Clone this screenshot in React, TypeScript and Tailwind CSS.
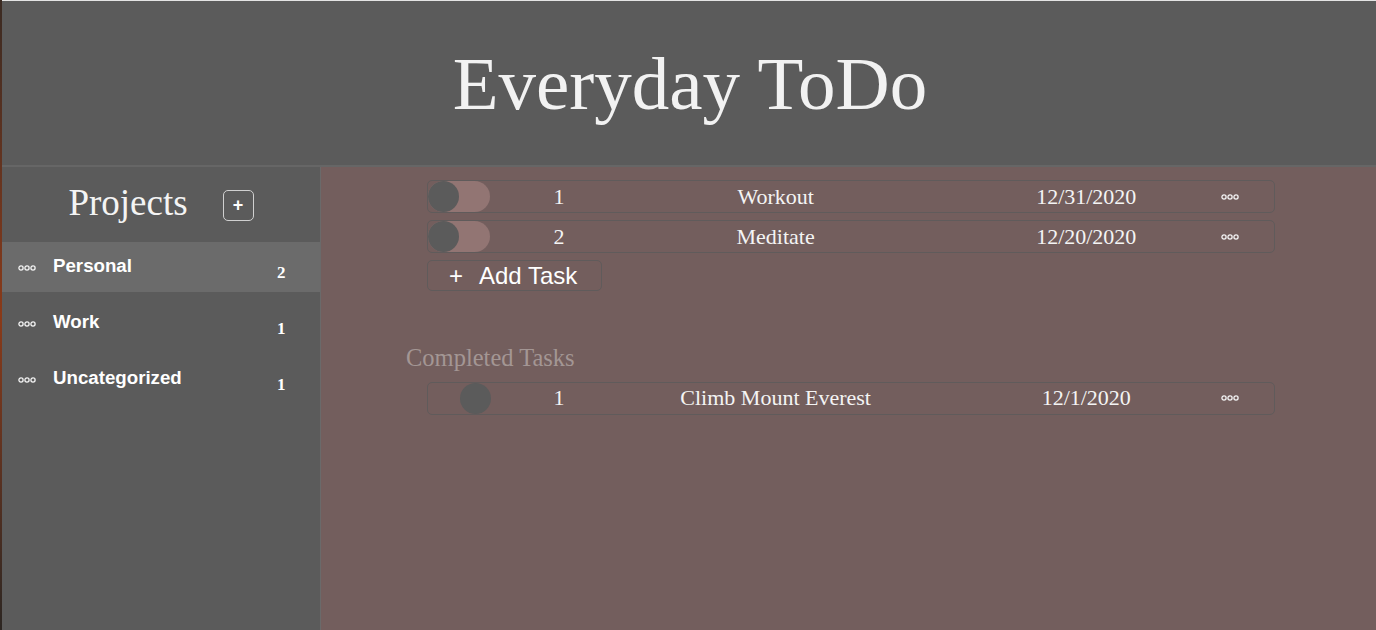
import React from "react";

const serif = { fontFamily: '"Liberation Serif", "Times New Roman", serif' };
const sans = { fontFamily: '"Liberation Sans", Arial, sans-serif' };

function Dots() {
  return (
    <svg width="18" height="6" viewBox="0 0 18 6" className="block">
      <circle cx="3" cy="3" r="2.1" fill="none" stroke="#f2f2f2" strokeWidth="1.3" />
      <circle cx="9" cy="3" r="2.1" fill="none" stroke="#f2f2f2" strokeWidth="1.3" />
      <circle cx="15" cy="3" r="2.1" fill="none" stroke="#f2f2f2" strokeWidth="1.3" />
    </svg>
  );
}

type Task = { n: number; name: string; date: string; done?: boolean };

function TaskRow({ t }: { t: Task }) {
  return (
    <div
      className="flex items-center h-[33px] w-[848px] rounded-[5px] border border-[#605b5b] text-[22px] text-[#f4f4f4]"
      style={serif}
    >
      <div className="w-[62px] h-[31px] shrink-0 relative">
        {t.done ? (
          <div className="absolute left-[32px] top-0 w-[31px] h-[31px] rounded-full bg-[#5b5b5b]" />
        ) : (
          <div className="w-[62px] h-[31px] rounded-full bg-[#927573] relative">
            <div className="absolute left-0 top-0 w-[31px] h-[31px] rounded-full bg-[#5b5b5b]" />
          </div>
        )}
      </div>
      <div className="w-[138px] text-center leading-none">{t.n}</div>
      <div className="w-[296px] text-center leading-none">{t.name}</div>
      <div className="w-[76px]" />
      <div className="w-[174px] text-center leading-none">{t.date}</div>
      <div className="w-[13px]" />
      <div className="w-[88px] flex justify-center">
        <Dots />
      </div>
    </div>
  );
}

export default function App() {
  const projects = [
    { name: "Personal", count: 2, active: true },
    { name: "Work", count: 1 },
    { name: "Uncategorized", count: 1 },
  ];
  const tasks: Task[] = [
    { n: 1, name: "Workout", date: "12/31/2020" },
    { n: 2, name: "Meditate", date: "12/20/2020" },
  ];
  return (
    <div className="flex w-[1376px] h-[630px] overflow-hidden bg-[#5b5b5b]">
      <div className="w-[2px] shrink-0 bg-gradient-to-b from-[#3a2a22] via-[#8a3a18] to-[#2c2622]" />
      <div className="flex-1 flex flex-col">
        <div className="h-[1px] bg-[#e4e4e4]" />
        <header className="h-[166px] shrink-0 flex items-center justify-center border-b-2 border-[#666666] bg-[#5b5b5b]">
          <h1 className="text-[75px] leading-none text-[#f2f2f2] pl-[2px]" style={serif}>
            Everyday ToDo
          </h1>
        </header>
        <div className="flex flex-1 min-h-0">
          <aside className="w-[319px] shrink-0 border-r border-[#6a6a6a] bg-[#5b5b5b]">
            <div className="h-[75px] flex items-center justify-center gap-[35px] pt-[2px]">
              <span className="text-[37px] leading-none text-[#f4f4f4] pb-[6px]" style={serif}>
                Projects
              </span>
              <div
                className="w-[31px] h-[31px] rounded-[5px] border border-[#d0d0d0] flex items-center justify-center text-white font-bold text-[18px] leading-none pb-[1px]"
                style={sans}
              >
                +
              </div>
            </div>
            <div className="flex flex-col gap-[6px]">
              {projects.map((p) => (
                <div
                  key={p.name}
                  className={`h-[50px] flex items-center ${p.active ? "bg-[#6b6b6b]" : ""}`}
                >
                  <div className="w-[16px]" />
                  <div className="pt-[1px]">
                    <Dots />
                  </div>
                  <div className="w-[17px]" />
                  <span className="w-[224px] text-[18.7px] font-bold text-white leading-none pb-[1px]" style={sans}>
                    {p.name}
                  </span>
                  <span className="text-[17px] font-bold text-white leading-none pt-[10px]" style={serif}>
                    {p.count}
                  </span>
                </div>
              ))}
            </div>
          </aside>
          <main className="flex-1 bg-[#735e5d] pt-[13px]">
            <div className="w-[848px] ml-[106px] flex flex-col gap-[7px]">
              {tasks.map((t) => (
                <TaskRow key={t.n} t={t} />
              ))}
              <div
                className="w-[175px] h-[31px] rounded-[5px] border border-[#605b5b] flex items-center pl-[21px] text-[24px] text-white leading-none"
                style={sans}
              >
                <span className="mr-[16px]">+</span>
                <span>Add Task</span>
              </div>
            </div>
            <div className="mt-[55px] ml-[85px] text-[24.5px] leading-none text-[#a39694]" style={serif}>
              Completed Tasks
            </div>
            <div className="mt-[11px] ml-[106px]">
              <TaskRow t={{ n: 1, name: "Climb Mount Everest", date: "12/1/2020", done: true }} />
            </div>
          </main>
        </div>
      </div>
    </div>
  );
}
